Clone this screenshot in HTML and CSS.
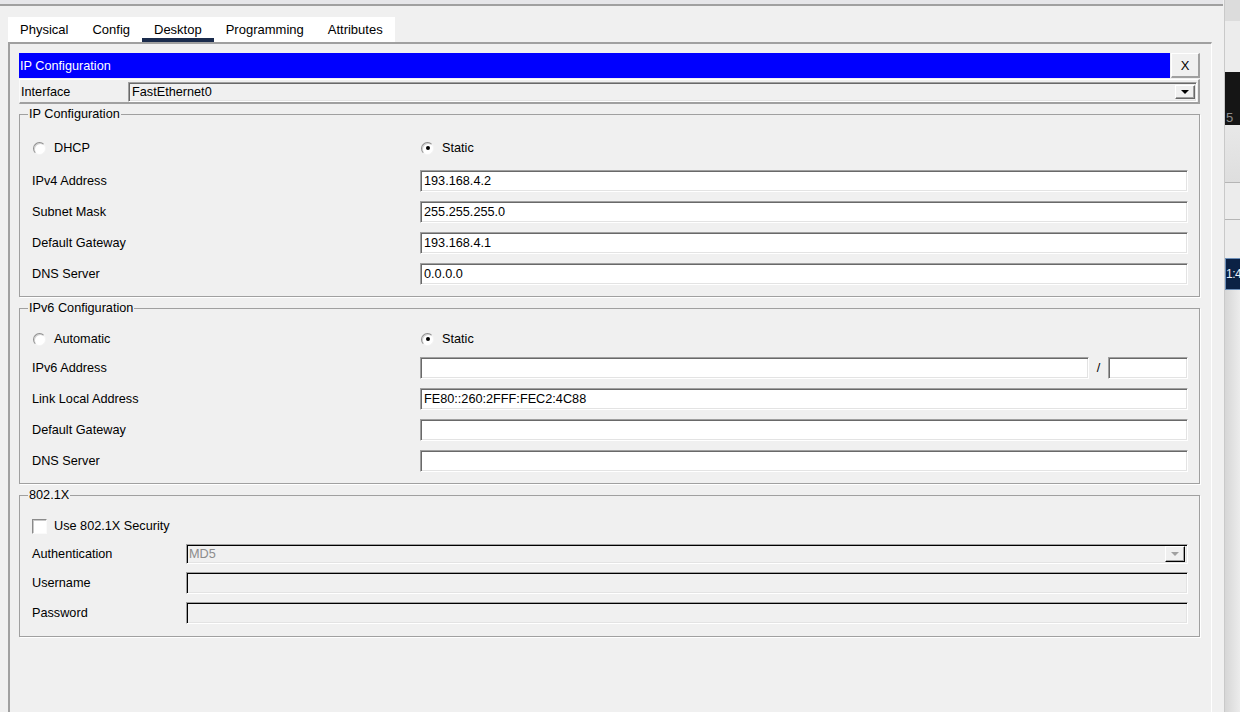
FILE: index.html
```html
<!DOCTYPE html>
<html>
<head>
<meta charset="utf-8">
<title>IP Configuration</title>
<link rel="stylesheet" href="styles.css">
</head>
<body>
<div class="screen">
  <div class="main">
    <div class="topbar"></div>
    <div class="tabs">
      <div class="tab">Physical</div>
      <div class="tab">Config</div>
      <div class="tab active">Desktop</div>
      <div class="tab">Programming</div>
      <div class="tab">Attributes</div>
    </div>
    <div class="panel">
      <div class="titlerow">
        <div class="titlebar">IP Configuration</div>
        <div class="closebtn">X</div>
      </div>
      <div class="ifacerow">
        <div class="ifacelabel">Interface</div>
        <div class="combo">
          <span class="combotext">FastEthernet0</span>
          <span class="dropbtn"><span class="tri"></span></span>
        </div>
      </div>

      <fieldset class="group g4">
        <legend>IP Configuration</legend>
        <div class="rows">
          <div class="row radiorow">
            <div class="opt"><span class="radio"></span>DHCP</div>
            <div class="opt"><span class="radio on"></span>Static</div>
          </div>
          <div class="row"><div class="lbl">IPv4 Address</div><div class="field">193.168.4.2</div></div>
          <div class="row"><div class="lbl">Subnet Mask</div><div class="field">255.255.255.0</div></div>
          <div class="row"><div class="lbl">Default Gateway</div><div class="field">193.168.4.1</div></div>
          <div class="row"><div class="lbl">DNS Server</div><div class="field">0.0.0.0</div></div>
        </div>
      </fieldset>

      <fieldset class="group g6">
        <legend>IPv6 Configuration</legend>
        <div class="rows">
          <div class="row radiorow">
            <div class="opt"><span class="radio"></span>Automatic</div>
            <div class="opt"><span class="radio on"></span>Static</div>
          </div>
          <div class="row">
            <div class="lbl">IPv6 Address</div>
            <div class="split">
              <div class="field grow"></div>
              <div class="slash">/</div>
              <div class="field prefix"></div>
            </div>
          </div>
          <div class="row"><div class="lbl">Link Local Address</div><div class="field">FE80::260:2FFF:FEC2:4C88</div></div>
          <div class="row"><div class="lbl">Default Gateway</div><div class="field"></div></div>
          <div class="row"><div class="lbl">DNS Server</div><div class="field"></div></div>
        </div>
      </fieldset>

      <fieldset class="group g8">
        <legend>802.1X</legend>
        <div class="rows">
          <div class="row checkrow">
            <div class="opt"><span class="check"></span>Use 802.1X Security</div>
          </div>
          <div class="row comborow">
            <div class="lbl">Authentication</div>
            <div class="combo disabled">
              <span class="combotext">MD5</span>
              <span class="dropbtn dis"><span class="tri"></span></span>
            </div>
          </div>
          <div class="row"><div class="lbl">Username</div><div class="field off"></div></div>
          <div class="row"><div class="lbl">Password</div><div class="field off"></div></div>
        </div>
      </fieldset>
    </div>
  </div>
  <div class="side">
    <div class="s1"></div>
    <div class="s2"></div>
    <div class="s3"><span>5</span></div>
    <div class="s4"></div>
    <div class="s5"></div>
    <div class="s6"></div>
    <div class="s7">1:4</div>
    <div class="s8"></div>
  </div>
</div>
</body>
</html>
```

FILE: styles.css
```css
* { box-sizing: border-box; }
html, body { margin: 0; padding: 0; }
body {
  width: 1240px;
  height: 712px;
  overflow: hidden;
  background: #f0f0f0;
  font-family: "Liberation Sans", Arial, sans-serif;
  font-size: 12.7px;
  color: #000;
}
.screen { display: flex; width: 1240px; height: 712px; }
.main {
  width: 1224px;
  height: 712px;
  background: #f0f0f0;
  display: flex;
  flex-direction: column;
  flex: none;
}
.topbar {
  flex: none;
  width: 1223px;
  height: 6px;
  background: #e6e6e9;
  border-bottom: 2px solid #a0a0a0;
}
.tabs {
  flex: none;
  display: flex;
  margin: 11px 0 0 8px;
  width: 387px;
  height: 25px;
  background: #fff;
}
.tab {
  padding: 0 12px;
  line-height: 25px;
  font-size: 13px;
  white-space: nowrap;
}
.tab.active { box-shadow: inset 0 -4px 0 #1a2b4c; }

.panel {
  flex: 1;
  display: flex;
  flex-direction: column;
  margin-left: 8px;
  width: 1204px;
  border-top: 2px solid #a0a0a0;
  border-left: 2px solid #a0a0a0;
  border-right: 1px solid #fff;
  padding: 9px 11px 0 9px;
}

.titlerow { flex: none; display: flex; height: 25px; }
.titlebar {
  flex: 1;
  background: #0000ff;
  color: #fff;
  line-height: 26px;
  padding-left: 1px;
  white-space: nowrap;
}
.closebtn {
  width: 29px;
  margin-left: 1px;
  display: flex;
  align-items: center;
  justify-content: center;
  font-size: 13px;
  border-top: 1px solid #fff;
  border-left: 1px solid #fff;
  border-right: 2px solid #a0a0a0;
  border-bottom: 2px solid #a0a0a0;
  background: #f0f0f0;
}

.ifacerow {
  flex: none;
  display: flex;
  align-items: flex-start;
  margin-top: 1px;
  height: 25px;
  border-top: 1px solid #fff;
  border-left: 1px solid #fafafa;
  border-right: 2px solid #a0a0a0;
  border-bottom: 2px solid #a0a0a0;
  padding: 2px 1px 0 0;
}
.ifacelabel { width: 108px; line-height: 21px; padding-left: 1px; }

.combo {
  flex: 1;
  height: 20px;
  display: flex;
  align-items: center;
  justify-content: space-between;
  background: #f0f0f0;
  border: 1px solid;
  border-color: #a0a0a0 #fff #fff #a0a0a0;
  box-shadow: inset 1px 1px 0 #696969, inset -1px -1px 0 #e3e3e3;
  padding: 0 1px 0 3px;
}
.combotext { white-space: nowrap; }
.dropbtn {
  width: 20px;
  height: 14px;
  display: flex;
  align-items: center;
  justify-content: center;
  background: #f0f0f0;
  border-top: 1px solid #fff;
  border-left: 1px solid #fff;
  border-right: 1px solid #696969;
  border-bottom: 1px solid #696969;
  box-shadow: inset -1px -1px 0 #a0a0a0;
}
.tri {
  width: 0;
  height: 0;
  border-left: 4px solid transparent;
  border-right: 4px solid transparent;
  border-top: 4px solid #000;
}

.group {
  flex: none;
  margin: 4px 0 0;
  padding: 0;
  min-width: 0;
  border: 1px solid #a0a0a0;
  box-shadow: 1px 1px 0 #fff;
}
.group legend {
  margin-left: 8px;
  padding: 0 1px;
  line-height: 13px;
  white-space: nowrap;
}
.rows {
  display: flex;
  flex-direction: column;
  gap: 9px;
  padding: 16px 11px 11px 12px;
}
.g6, .g8 { margin-top: 5px; }
.g6 .rows { padding-top: 13px; }
.g4 .radiorow { margin-bottom: 2px; }
.g6 .radiorow { margin-bottom: -2px; }
.g8 .rows { padding-top: 13px; padding-bottom: 12px; gap: 8px; }
.g8 .checkrow { margin-bottom: -1px; }

.row {
  display: grid;
  grid-template-columns: 388px 1fr;
  align-items: center;
  height: 22px;
}
.g8 .row { grid-template-columns: 154px 1fr; }
.g8 .checkrow { display: flex; }
.g8 .comborow { height: 20px; }

.lbl { white-space: nowrap; }

.opt { display: flex; align-items: center; gap: 8px; white-space: nowrap; }
.g8 .opt { gap: 7px; }
.radio {
  flex: none;
  width: 13px;
  height: 13px;
  margin-left: 1px;
  border-radius: 50%;
  background: #fff;
  border: 1px solid;
  border-color: #8e8e8e #f4f4f4 #f4f4f4 #8e8e8e;
  box-shadow: inset 1px 1px 0 #d2d2d2;
  display: flex;
  align-items: center;
  justify-content: center;
}
.radio.on::after {
  content: "";
  width: 4px;
  height: 4px;
  border-radius: 50%;
  background: #000;
}
.check {
  flex: none;
  width: 15px;
  height: 15px;
  background: #fff;
  border: 1px solid;
  border-color: #8a8a8a #fafafa #fafafa #8a8a8a;
  box-shadow: inset 1px 1px 0 #c8c8c8;
}

.field {
  height: 22px;
  background: #fff;
  border: 1px solid;
  border-color: #a0a0a0 #fff #fff #a0a0a0;
  box-shadow: inset 1px 1px 0 #696969, inset -1px -1px 0 #e3e3e3;
  padding-left: 3px;
  line-height: 20px;
  white-space: nowrap;
  overflow: hidden;
}
.field.off {
  background: #f0f0f0;
  box-shadow: inset 1px 1px 0 #000, inset -1px -1px 0 #e3e3e3;
}
.split { display: flex; align-items: center; height: 22px; }
.split .grow { flex: 1; }
.slash { width: 19px; text-align: center; }
.split .prefix { width: 80px; flex: none; }

.combo.disabled {
  box-shadow: inset 1px 1px 0 #000, inset -1px -1px 0 #e3e3e3;
  padding: 0 2px 0 2px;
}
.combo.disabled .combotext { color: #8c8c8c; }
.dropbtn.dis {
  height: 16px;
  border-right-color: #000;
  border-bottom-color: #000;
}
.dropbtn.dis .tri { border-top-color: #a0a0a0; }

.side {
  flex: none;
  width: 16px;
  height: 712px;
  border-left: 1px solid #c9c9c9;
  display: flex;
  flex-direction: column;
  overflow: hidden;
}
.s1 { height: 21px; background: #dcdcdc; flex: none; }
.s2 { height: 51px; background: #ececec; flex: none; }
.s3 {
  height: 53px;
  flex: none;
  background: #151515;
  color: #8e8e8e;
  font-size: 13px;
  display: flex;
  align-items: flex-end;
  overflow: hidden;
  padding-left: 1px;
}
.s3 span { line-height: 15px; }
.s4 { height: 57px; flex: none; background: linear-gradient(#e8e8e8, #dedede); }
.s5 { height: 37px; flex: none; border-top: 1px solid #b5b5b5; background: #ececec; }
.s6 { height: 39px; flex: none; border-top: 1px solid #b5b5b5; background: #ececec; }
.s7 {
  height: 32px;
  flex: none;
  background: #0b2245;
  border: 1px solid #6d8fb8;
  border-right: 0;
  color: #e8eef8;
  font-size: 12px;
  line-height: 30px;
  letter-spacing: -0.5px;
  white-space: nowrap;
  overflow: hidden;
}
.s8 { flex: 1; background: linear-gradient(to right, #d6d6d6, #ececec); }
```
